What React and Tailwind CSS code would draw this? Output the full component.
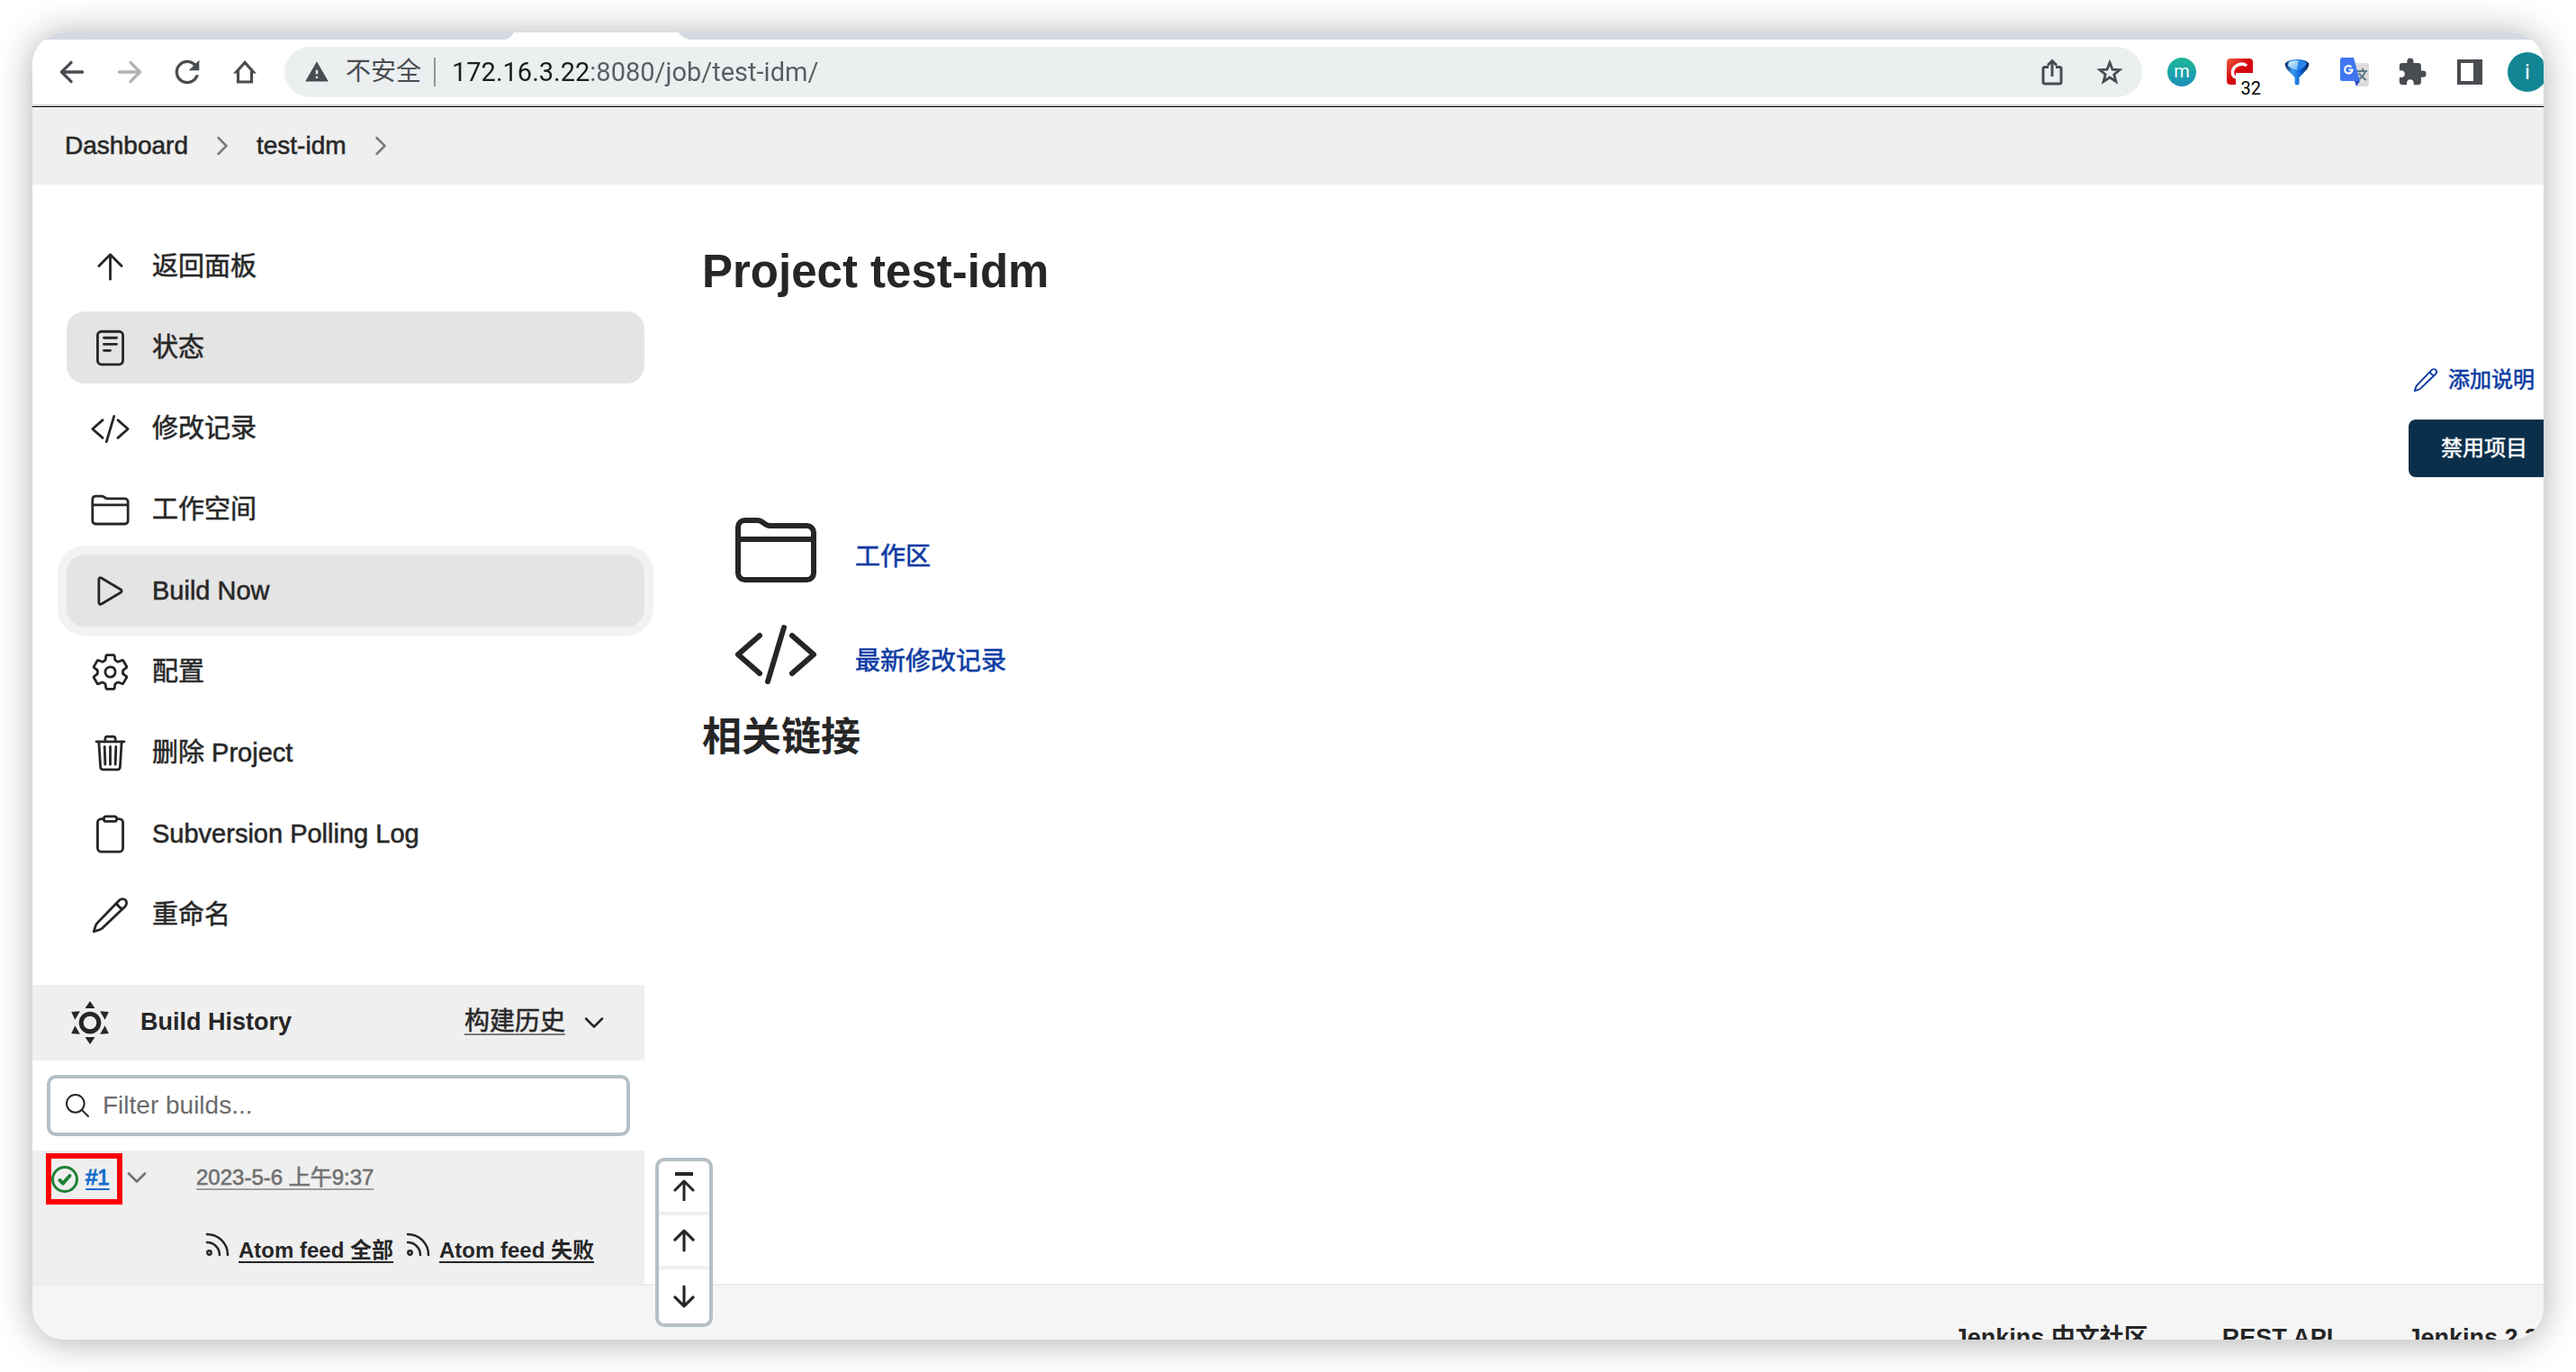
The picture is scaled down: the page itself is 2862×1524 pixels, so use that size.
import React from "react";
import {
  IoReaderOutline,
  IoCodeSlashOutline,
  IoFolderOutline,
  IoPlayOutline,
  IoSettingsOutline,
  IoTrashOutline,
  IoClipboardOutline,
  IoSearchOutline,
} from "react-icons/io5";
import { MdRefresh, MdExtension, MdWarning } from "react-icons/md";

const MEDIUM = "[-webkit-text-stroke:1px_#26262690]";

function Stroke({ d, className, width = 32 }) {
  return (
    <svg viewBox="0 0 512 512" fill="none" stroke="currentColor" strokeWidth={width} strokeLinecap="round" strokeLinejoin="round" className={className} aria-hidden="true">
      <path d={d} />
    </svg>
  );
}

const ARROW_UP = "M112 244l144-144 144 144M256 120v292";
const ARROW_DOWN = "M112 268l144 144 144-144M256 392V100";
const CHEVRON_DOWN = "M112 184l144 144 144-144";
const CHEVRON_RIGHT = "M184 112l144 144-144 144";
const PENCIL =
  "M48 464C62 420 66 386 88 360L362 76C386 50 424 44 448 66C470 90 464 126 440 150L152 424C126 446 92 450 48 464ZM336 106C350 136 376 162 408 178";

function ArrowUpIcon({ className }) {
  return <Stroke d={ARROW_UP} className={className} />;
}

function PencilIcon({ className }) {
  return <Stroke d={PENCIL} className={className} />;
}

function IconButton({ label, children }) {
  return (
    <button type="button" aria-label={label} className="flex h-14 w-16 shrink-0 items-center justify-center text-[#494c50]">
      {children}
    </button>
  );
}

function TabStrip() {
  return (
    <div className="flex h-2 shrink-0 bg-[#d6d9e4] pl-[523px]">
      <svg viewBox="0 0 210 8" className="h-2 w-[210px] shrink-0" aria-hidden="true">
        <path d="M0 8C6 8 9 5 12 0H195C198 5 203 8 210 8Z" fill="#fff" />
      </svg>
    </div>
  );
}

function PdfIcon() {
  return (
    <span className="relative block h-8 w-[29px]">
      <svg viewBox="0 0 29 32" className="h-8 w-[29px]" aria-hidden="true">
        <defs>
          <linearGradient id="pdf" x1="0" y1="0" x2="1" y2="1">
            <stop offset="0" stopColor="#ee5b3e" />
            <stop offset="0.45" stopColor="#d8090f" />
            <stop offset="1" stopColor="#c40010" />
          </linearGradient>
        </defs>
        <path d="M4 1H25a4 4 0 0 1 4 4V17H10V30H4a4 4 0 0 1-4-4V5a4 4 0 0 1 4-4Z" fill="url(#pdf)" />
        <path d="M22 9C17 5 8 8 6.500 15C6 19 7 21 10 22" fill="none" stroke="#fff" strokeWidth="3.500" />
      </svg>
      <span className="absolute left-4 top-[22px] font-[Roboto] text-xl leading-6 text-black">32</span>
    </span>
  );
}

function FunnelIcon() {
  return (
    <svg viewBox="0 0 28 30" className="h-[30px] w-7" aria-hidden="true">
      <defs>
        <linearGradient id="funnel" x1="0" y1="0" x2="1" y2="0">
          <stop offset="0" stopColor="#06255c" />
          <stop offset="0.3" stopColor="#3d9cf4" />
          <stop offset="0.65" stopColor="#0a62d6" />
          <stop offset="1" stopColor="#041b46" />
        </linearGradient>
        <linearGradient id="shine" x1="0" y1="0" x2="1" y2="1">
          <stop offset="0" stopColor="#e9f6ff" />
          <stop offset="1" stopColor="#5fb2f8" />
        </linearGradient>
      </defs>
      <path d="M1 5Q5 1 14 1T27 5Q28 8 25 12L16.500 21V27a2.500 2.500 0 0 1-5 0V21L3 12Q0 8 1 5Z" fill="url(#funnel)" />
      <path d="M5 4Q9 2 16 2L14 13Q7 11 4 8Z" fill="url(#shine)" />
      <path d="M16 2Q22 2 25 5Q23 11 14 13Z" fill="#2b83ea" />
    </svg>
  );
}

function TranslateIcon() {
  return (
    <svg viewBox="0 0 32 32" className="size-8" aria-hidden="true">
      <path d="M14 6H30a2 2 0 0 1 2 2V30a2 2 0 0 1-2 2H18Z" fill="#dcdcdc" />
      <path d="M19 15H30M25 12V15M28 15C27 19 24 22 20 25M21 17C23 21 26 23 29 25" stroke="#5d7a86" strokeWidth="2" fill="none" />
      <path d="M16 26H22L18 32Z" fill="#2a4bb8" />
      <path d="M2 0H15L22 26H2a2 2 0 0 1-2-2V2A2 2 0 0 1 2 0Z" fill="#3f76f0" />
      <path d="M12.500 10.500A4.200 4.200 0 1 0 13.500 13.500H9.500" stroke="#fff" strokeWidth="2.200" fill="none" />
    </svg>
  );
}

function Toolbar() {
  return (
    <div className="flex h-[72px] shrink-0 items-center bg-white pl-3">
      <IconButton label="返回">
        <Stroke d="M244 400L100 256l144-144M120 256h292" width={44} className="size-[38px]" />
      </IconButton>
      <IconButton label="前进">
        <Stroke d="M268 112l144 144-144 144M392 256H100" width={44} className="size-[38px] text-[#b0b2b4]" />
      </IconButton>
      <IconButton label="重新加载">
        <MdRefresh className="size-10" />
      </IconButton>
      <IconButton label="主页">
        <svg viewBox="0 0 26 26" className="size-[26px]" fill="none" stroke="currentColor" strokeWidth="3.200" aria-hidden="true">
          <path d="M13 2.500L3.500 13H5.500V24H20.500V13H22.500Z" />
        </svg>
      </IconButton>
      <div className="ml-3 flex h-14 min-w-0 flex-1 items-center rounded-full bg-[#ebeff0] pl-[22px] pr-1 text-[28px] leading-8">
        <MdWarning className="size-7 shrink-0 text-[#494c50]" />
        <span className="ml-[18px] shrink-0 text-[#494c50]">不安全</span>
        <span className="ml-[14px] h-8 w-0.5 shrink-0 bg-[#919496]" />
        <input
          aria-label="地址"
          defaultValue="172.16.3.22:8080/job/test-idm/"
          className="ml-[18px] min-w-0 flex-1 bg-[linear-gradient(90deg,#1c1d1f_153px,#5a5d60_153px)] bg-clip-text font-[Roboto] text-[29px] leading-9 text-transparent outline-none"
        />
        <IconButton label="分享">
          <svg viewBox="0 0 24 30" className="h-[30px] w-6" fill="none" stroke="currentColor" strokeWidth="3" aria-hidden="true">
            <path d="M8 9.500H4a2 2 0 0 0-2 2V26a2 2 0 0 0 2 2H20a2 2 0 0 0 2-2V11.500a2 2 0 0 0-2-2H16M12 20V3M7 7.500L12 2.500L17 7.500" />
          </svg>
        </IconButton>
        <IconButton label="收藏">
          <svg viewBox="0 0 30 30" className="size-[30px]" fill="none" stroke="currentColor" strokeWidth="2.800" aria-hidden="true">
            <path d="M15 4.500L18 12.200L26 12.700L19.800 17.700L21.900 25.500L15 21L8.100 25.500L10.200 17.700L4 12.700L12 12.200Z" />
          </svg>
        </IconButton>
      </div>
      <div className="-mr-[14px] ml-3 flex shrink-0">
        <IconButton label="m">
          <span className="flex size-8 items-center justify-center rounded-full bg-linear-to-b from-[#1fb795] to-[#1d8fb8] pb-0.5 font-[Roboto] text-xl text-white">m</span>
        </IconButton>
        <IconButton label="PDF">
          <PdfIcon />
        </IconButton>
        <IconButton label="过滤器">
          <FunnelIcon />
        </IconButton>
        <IconButton label="翻译">
          <TranslateIcon />
        </IconButton>
        <IconButton label="扩展程序">
          <MdExtension className="size-[34px]" />
        </IconButton>
        <IconButton label="侧边栏">
          <svg viewBox="0 0 28 28" className="size-7" aria-hidden="true">
            <path d="M0 0H28V28H0ZM4 4V24H18V4Z" fill="currentColor" fillRule="evenodd" />
          </svg>
        </IconButton>
        <IconButton label="用户">
          <span className="flex size-11 items-center justify-center rounded-full bg-[#128694] font-[Roboto] text-2xl text-white">i</span>
        </IconButton>
      </div>
    </div>
  );
}

function Breadcrumbs() {
  return (
    <nav aria-label="Breadcrumb" className={`flex h-[86px] shrink-0 items-center bg-[#efefef] pl-9 text-[28px] leading-8 ${MEDIUM}`}>
      <a href="#dashboard">Dashboard</a>
      <Stroke d={CHEVRON_RIGHT} width={40} className="mx-[22px] size-8 text-[#7c7c7c]" />
      <a href="#job">test-idm</a>
      <Stroke d={CHEVRON_RIGHT} width={40} className="mx-[22px] size-8 text-[#7c7c7c]" />
    </nav>
  );
}

const TASKS = [
  { label: "返回面板", Icon: ArrowUpIcon },
  { label: "状态", Icon: IoReaderOutline, look: "bg-[#e4e4e4]" },
  { label: "修改记录", Icon: IoCodeSlashOutline },
  { label: "工作空间", Icon: IoFolderOutline },
  { label: "Build Now", Icon: IoPlayOutline, look: "bg-[#e4e4e4] ring-10 ring-[#f2f2f2]" },
  { label: "配置", Icon: IoSettingsOutline },
  { label: "删除 Project", Icon: IoTrashOutline },
  { label: "Subversion Polling Log", Icon: IoClipboardOutline },
  { label: "重命名", Icon: PencilIcon },
];

function Tasks() {
  return (
    <ul className="flex flex-col gap-2.5 pl-[38px] pt-[51px]">
      {TASKS.map(({ label, Icon, look = "" }) => (
        <li key={label}>
          <a href="#task" className={`flex h-20 items-center gap-6 rounded-[20px] px-[26px] text-[29px] leading-9 ${MEDIUM} ${look}`}>
            <Icon className="size-[45px] shrink-0" />
            {label}
          </a>
        </li>
      ))}
    </ul>
  );
}

function TrendIcon() {
  return (
    <svg viewBox="-24 -24 48 48" className="size-12" fill="currentColor" aria-hidden="true">
      <circle r="9.800" fill="none" stroke="currentColor" strokeWidth="5" />
      {[0, 60, 120, 180, 240, 300].map((angle) => (
        <path key={angle} d="M0-24L5.500-16H-5.500Z" transform={`rotate(${angle})`} />
      ))}
    </svg>
  );
}

function FeedLink({ children }) {
  return (
    <a href="#feed" className="flex gap-2.5 text-2xl font-bold">
      <svg viewBox="0 0 27 27" className="size-[27px]" fill="none" stroke="currentColor" strokeWidth="2.500" strokeLinecap="round" aria-hidden="true">
        <path d="M2 2A23 23 0 0 1 25 25M2 11A14 14 0 0 1 16 25" />
        <circle cx="4.500" cy="22.500" r="2.200" />
      </svg>
      <span className="mt-1.5 leading-7 underline decoration-2 underline-offset-4">{children}</span>
    </a>
  );
}

function BuildHistory() {
  return (
    <section className="mt-[38px]">
      <div className="flex h-[84px] items-center bg-[#efefef] pl-10 pr-10">
        <TrendIcon />
        <h2 className="ml-8 pb-0.5 text-[27px] leading-8 font-bold">Build History</h2>
        <a href="#trend" className={`ml-auto pb-0.5 text-[28px] leading-9 underline decoration-2 underline-offset-4 ${MEDIUM}`}>
          构建历史
        </a>
        <Stroke d={CHEVRON_DOWN} width={40} className="ml-4 size-8" />
      </div>
      <label className="mx-4 my-4 flex h-[68px] items-center gap-3 rounded-[10px] border-4 border-[#b5c0c6] pl-3.5">
        <IoSearchOutline className="size-8" />
        <input
          type="text"
          aria-label="Filter builds"
          placeholder="Filter builds..."
          className="min-w-0 flex-1 text-[28px] leading-9 outline-none placeholder:text-[#6b6b6b]"
        />
      </label>
      <div className="h-[148px] bg-[#efefef] pt-[3px]">
        <div className="flex items-center pl-[15px] text-2xl leading-8">
          <span className="flex h-[57px] w-[85px] items-center gap-2 border-6 border-[#fb0007]">
            <svg viewBox="0 0 30 30" className="size-[30px]" fill="none" stroke="#1e8235" strokeLinecap="round" strokeLinejoin="round" role="img" aria-label="Success">
              <circle cx="15" cy="15" r="13.500" strokeWidth="3" />
              <path d="M9.500 16L13 19.500L20.500 11" strokeWidth="4" />
            </svg>
            <a href="#build" className="pb-1 text-[#136dcb] underline decoration-2 underline-offset-4 [-webkit-text-stroke:1px_#136dcb]">#1</a>
          </span>
          <Stroke d={CHEVRON_DOWN} width={44} className="mb-1 size-8 text-[#757575]" />
          <a href="#build" className="ml-[50px] pb-1 text-[#6f6f6f] underline decoration-2 underline-offset-4 [-webkit-text-stroke:1px_#6f6f6fa0]">
            2023-5-6 上午9:37
          </a>
        </div>
        <div className="mt-[31px] flex justify-end gap-3.5 pr-14">
          <FeedLink>Atom feed 全部</FeedLink>
          <FeedLink>Atom feed 失败</FeedLink>
        </div>
      </div>
    </section>
  );
}

function ToTopIcon({ className }) {
  return (
    <svg viewBox="0 0 24 32" fill="none" stroke="currentColor" strokeLinecap="round" strokeLinejoin="round" className={className} aria-hidden="true">
      <path d="M2 2H22" strokeWidth="4" strokeLinecap="butt" />
      <path d="M2 20L12 10L22 20M12 11V31" strokeWidth="3" />
    </svg>
  );
}

function PageControls() {
  const cell = "flex h-[60px] items-center justify-center";
  return (
    <div className="absolute bottom-3.5 left-[692px] flex w-16 flex-col divide-y-4 divide-[#efefef] rounded-[10px] border-4 border-[#b5c0c6] bg-white">
      <button type="button" aria-label="最新" className={cell}>
        <ToTopIcon className="h-8 w-6" />
      </button>
      <button type="button" aria-label="较新" className={cell}>
        <Stroke d={ARROW_UP} width={44} className="size-9" />
      </button>
      <button type="button" aria-label="较早" className={cell}>
        <Stroke d={ARROW_DOWN} width={44} className="size-9" />
      </button>
    </div>
  );
}

function Main() {
  return (
    <main className="min-w-0 flex-1 pl-16 pt-[63px]">
      <h1 className="text-[51px] leading-[68px] font-bold">Project test-idm</h1>
      <div className="-mr-[18px] mt-[68px] flex flex-col items-end gap-[26px] text-2xl">
        <a href="#describe" className="flex h-9 items-center gap-2.5 pr-7 text-[#0b3aa2] [-webkit-text-stroke:1px_#0b3aa2a0]">
          <PencilIcon className="size-[30px]" />
          添加说明
        </a>
        <button type="button" className="h-16 rounded-lg bg-[#0b2f4b] px-9 text-white [-webkit-text-stroke:1px_#ffffff90]">
          禁用项目
        </button>
      </div>
      <ul className="mt-[33px] flex flex-col gap-5 pl-[34px] text-[28px] leading-9 text-[#0b3aa2] [-webkit-text-stroke:1px_#0b3aa2a0]">
        <li>
          <a href="#workspace" className="flex items-center gap-10">
            <IoFolderOutline className="size-24 text-[#262626]" />
            <span className="mt-4">工作区</span>
          </a>
        </li>
        <li>
          <a href="#changes" className="flex items-center gap-10">
            <IoCodeSlashOutline className="size-24 text-[#262626]" />
            <span className="mt-4">最新修改记录</span>
          </a>
        </li>
      </ul>
      <h2 className="mt-4 text-[44px] leading-[56px] font-bold">相关链接</h2>
    </main>
  );
}

export default function App() {
  return (
    <div className="h-screen overflow-hidden bg-white p-9 font-['Liberation_Sans','Noto_Sans_CJK_SC',sans-serif] text-[#262626]">
      <div className="relative flex h-full flex-col overflow-hidden rounded-[36px] bg-white shadow-[0_2px_40px_rgba(0,0,0,0.32)]">
        <TabStrip />
        <Toolbar />
        <div className="h-[3px] shrink-0 border-b border-black bg-[#d3d6d6]" />
        <Breadcrumbs />
        <div className="flex shrink-0">
          <aside className="w-[680px] shrink-0">
            <Tasks />
            <BuildHistory />
          </aside>
          <Main />
        </div>
        <footer className="flex shrink-0 grow justify-end gap-[82px] border-t-2 border-[#ebebeb] bg-[#f5f5f5] pt-10 text-[27px] leading-9 font-bold">
          <a href="#community">Jenkins 中文社区</a>
          <a href="#api">REST API</a>
          <a href="#version" className="-mr-6">Jenkins 2.332</a>
        </footer>
        <PageControls />
      </div>
    </div>
  );
}
